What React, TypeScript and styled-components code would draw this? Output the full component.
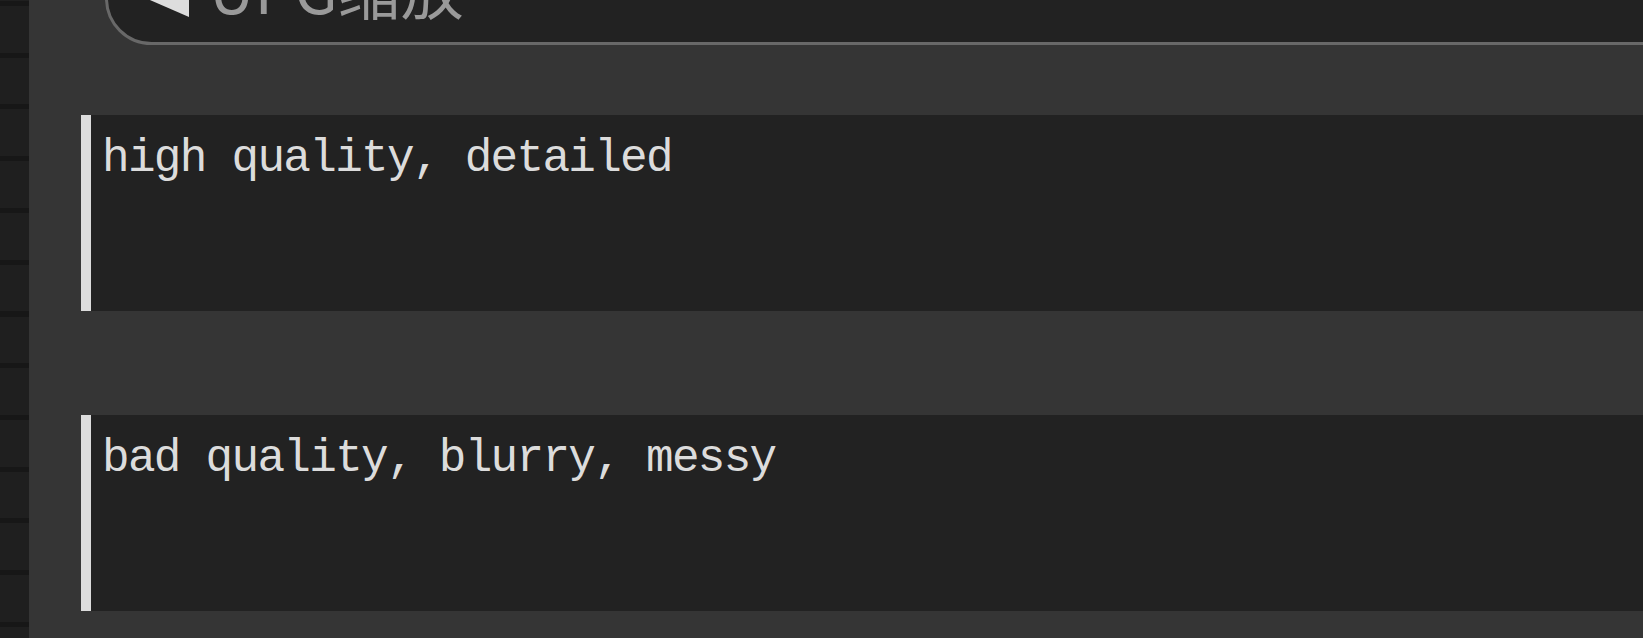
import React from 'react'
import styled, {createGlobalStyle} from 'styled-components'

const Global = createGlobalStyle`
    html, body {
        margin: 0;
        padding: 0;
        background: #353535;
        overflow: hidden;
    }
`

const prompts = [
    'high quality, detailed',
    'bad quality, blurry, messy',
]

const App = () => {
  return (
    <Container>
        <Global />
        <Sidebar />
        <Panel>
            <NodeTitle>
                <Arrow viewBox="0 0 48 48">
                    <polygon points="0,24 46,4 46,44" fill="#dddddd" />
                </Arrow>
                <Title>UPG缩放</Title>
            </NodeTitle>
            {prompts.map((p) => (
                <PromptBox key={p}>{p}</PromptBox>
            ))}
        </Panel>
    </Container>
  )
}

export default App

const PromptBox = styled.div`
    height: 196px;
    box-sizing: border-box;
    margin-top: 70px;
    margin-right: -40px;
    background-color: #222222;
    border-left: 10px solid #dcdcdc;
    padding: 18px 0 0 11px;
    font-family: "Liberation Mono", monospace;
    font-size: 46px;
    letter-spacing: -1.7px;
    line-height: normal;
    color: #dcdcdc;
    white-space: pre;
    & + & {
        margin-top: 104px;
    }
`
const Title = styled.div`
    font-family: "Noto Sans CJK SC", "Noto Sans", sans-serif;
    font-size: 63px;
    line-height: 1;
    color: #9a9a9a;
    margin-bottom: 24px;
    margin-left: 18px;
`
const Arrow = styled.svg`
    width: 48px;
    height: 48px;
    flex-shrink: 0;
    margin-bottom: 21px;
`
const NodeTitle = styled.div`
    display: flex;
    align-items: flex-end;
    box-sizing: border-box;
    height: 93px;
    margin-top: -48px;
    margin-left: 24px;
    margin-right: -200px;
    padding-left: 35px;
    background-color: #222222;
    border: 3px solid #686868;
    border-radius: 47px;
`
const Panel = styled.div`
    flex: 1;
    min-width: 0;
    background-color: #353535;
    padding-left: 52px;
    overflow: hidden;
`
const Sidebar = styled.div`
    width: 29px;
    flex-shrink: 0;
    background-color: #1f1f1f;
    background-image: repeating-linear-gradient(
        to bottom,
        #171717 0px,
        #171717 5px,
        #1f1f1f 5px,
        #1f1f1f 51.75px
    );
    background-position: 0 1px;
`
const Container = styled.div`
    display: flex;
    width: 100%;
    height: 638px;
    overflow: hidden;
`
